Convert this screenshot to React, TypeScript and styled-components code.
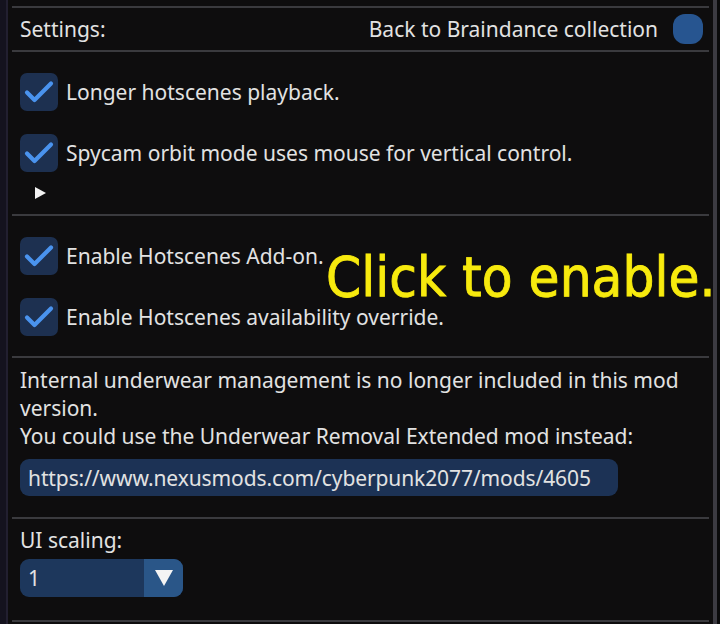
import React from "react";
import styled, { createGlobalStyle } from "styled-components";

const Global = createGlobalStyle`
  html, body { margin: 0; padding: 0; background: #0d0c0d; }
  body { font-family: "Noto Sans", "Open Sans", sans-serif; }
`;

const Page = styled.div`
  width: 720px;
  height: 624px;
  display: flex;
  background: #0e0d0e;
  overflow: hidden;
  position: relative;
`;

const LeftEdge = styled.div`
  width: 6px;
  background: #14121e;
  border-right: 2px solid #221f30;
`;

const RightEdge = styled.div`
  width: 3px;
  background: #0a0a0b;
  border-left: 4px solid #3c3b42;
`;

const Panel = styled.div`
  flex: 1;
  display: flex;
  flex-direction: column;
  padding-top: 6px;
  color: #e2e2e2;
  font-size: 21px;
`;

const Separator = styled.div`
  height: 2px;
  margin: 0 4px;
  background: #3a3a3e;
  flex-shrink: 0;
`;

const Section = styled.div`
  display: flex;
  flex-direction: column;
  padding: 0 0 0 12px;
`;

const HeaderRow = styled.div`
  height: 42px;
  display: flex;
  align-items: center;
  justify-content: space-between;
  padding: 0 10px 0 12px;
`;

const HeaderRight = styled.div`
  display: flex;
  align-items: center;
  gap: 15px;
`;

const RoundButton = styled.div`
  width: 30px;
  height: 30px;
  border-radius: 12px;
  background: #275590;
`;

const CheckRow = styled.div`
  height: 38px;
  display: flex;
  align-items: center;
  gap: 8px;
`;

const Box = styled.div`
  width: 38px;
  height: 38px;
  border-radius: 7px;
  background: #1d3050;
  display: flex;
  align-items: center;
  justify-content: center;
`;

const Arrow = styled.div`
  width: 0;
  height: 0;
  margin-left: 15px;
  border-top: 6px solid transparent;
  border-bottom: 6px solid transparent;
  border-left: 11px solid #f2f2f2;
`;

const TextLine = styled.div`
  line-height: 28px;
  height: 28px;
  white-space: nowrap;
`;

const UrlBox = styled.div`
  width: 598px;
  height: 37px;
  border-radius: 9px;
  background: #1c3255;
  display: flex;
  align-items: center;
  padding-left: 8px;
  box-sizing: border-box;
  white-space: nowrap;
  letter-spacing: -0.1px;
`;

const Combo = styled.div`
  width: 163px;
  height: 38px;
  border-radius: 9px;
  overflow: hidden;
  display: flex;
  background: #1d375c;
`;

const ComboValue = styled.div`
  flex: 1;
  display: flex;
  align-items: center;
  padding-left: 8px;
`;

const ComboArrow = styled.div`
  width: 39px;
  background: #2a5688;
  display: flex;
  align-items: center;
  justify-content: center;
`;

const DownTri = styled.div`
  width: 0;
  height: 0;
  border-left: 9px solid transparent;
  border-right: 9px solid transparent;
  border-top: 16px solid #f4f4f4;
`;

const Callout = styled.div`
  position: absolute;
  left: 326px;
  top: 244px;
  font-family: "Liberation Sans Narrow", "DejaVu Sans Condensed", sans-serif;
  font-size: 56px;
  line-height: 66px;
  color: #f7ea0e;
  white-space: nowrap;
  -webkit-text-stroke: 0.8px #f7ea0e;
  text-shadow: 0 0 1px #6a5c00;
`;

const Check = () => (
  <svg width="38" height="38" viewBox="0 0 38 38">
    <path d="M7 19.5 L14.5 27 L31 10.5" fill="none" stroke="#4a93ee" strokeWidth="4.2" strokeLinecap="round" strokeLinejoin="round" />
  </svg>
);

const Checkbox: React.FC<{ label: string }> = ({ label }) => (
  <CheckRow>
    <Box><Check /></Box>
    <span>{label}</span>
  </CheckRow>
);

const Spacer = styled.div<{ $h: number }>`
  height: ${(p) => p.$h}px;
  flex-shrink: 0;
`;

export default function App() {
  return (
    <>
      <Global />
      <Page>
        <LeftEdge />
        <Panel>
          <Separator />
          <HeaderRow>
            <span>Settings:</span>
            <HeaderRight>
              <span>Back to Braindance collection</span>
              <RoundButton />
            </HeaderRight>
          </HeaderRow>
          <Separator />
          <Section>
            <Spacer $h={21} />
            <Checkbox label="Longer hotscenes playback." />
            <Spacer $h={23} />
            <Checkbox label="Spycam orbit mode uses mouse for vertical control." />
            <Spacer $h={15} />
            <Arrow />
            <Spacer $h={15} />
          </Section>
          <Separator />
          <Section>
            <Spacer $h={21} />
            <Checkbox label="Enable Hotscenes Add-on." />
            <Spacer $h={23} />
            <Checkbox label="Enable Hotscenes availability override." />
            <Spacer $h={20} />
          </Section>
          <Separator />
          <Section>
            <Spacer $h={8} />
            <TextLine>Internal underwear management is no longer included in this mod</TextLine>
            <TextLine>version.</TextLine>
            <TextLine>You could use the Underwear Removal Extended mod instead:</TextLine>
            <Spacer $h={9} />
            <UrlBox>https://www.nexusmods.com/cyberpunk2077/mods/4605</UrlBox>
            <Spacer $h={21} />
          </Section>
          <Separator />
          <Section>
            <Spacer $h={7} />
            <TextLine>UI scaling:</TextLine>
            <Spacer $h={5} />
            <Combo>
              <ComboValue>1</ComboValue>
              <ComboArrow><DownTri /></ComboArrow>
            </Combo>
            <Spacer $h={23} />
          </Section>
          <Separator />
        </Panel>
        <RightEdge />
        <Callout>Click to enable.</Callout>
      </Page>
    </>
  );
}
